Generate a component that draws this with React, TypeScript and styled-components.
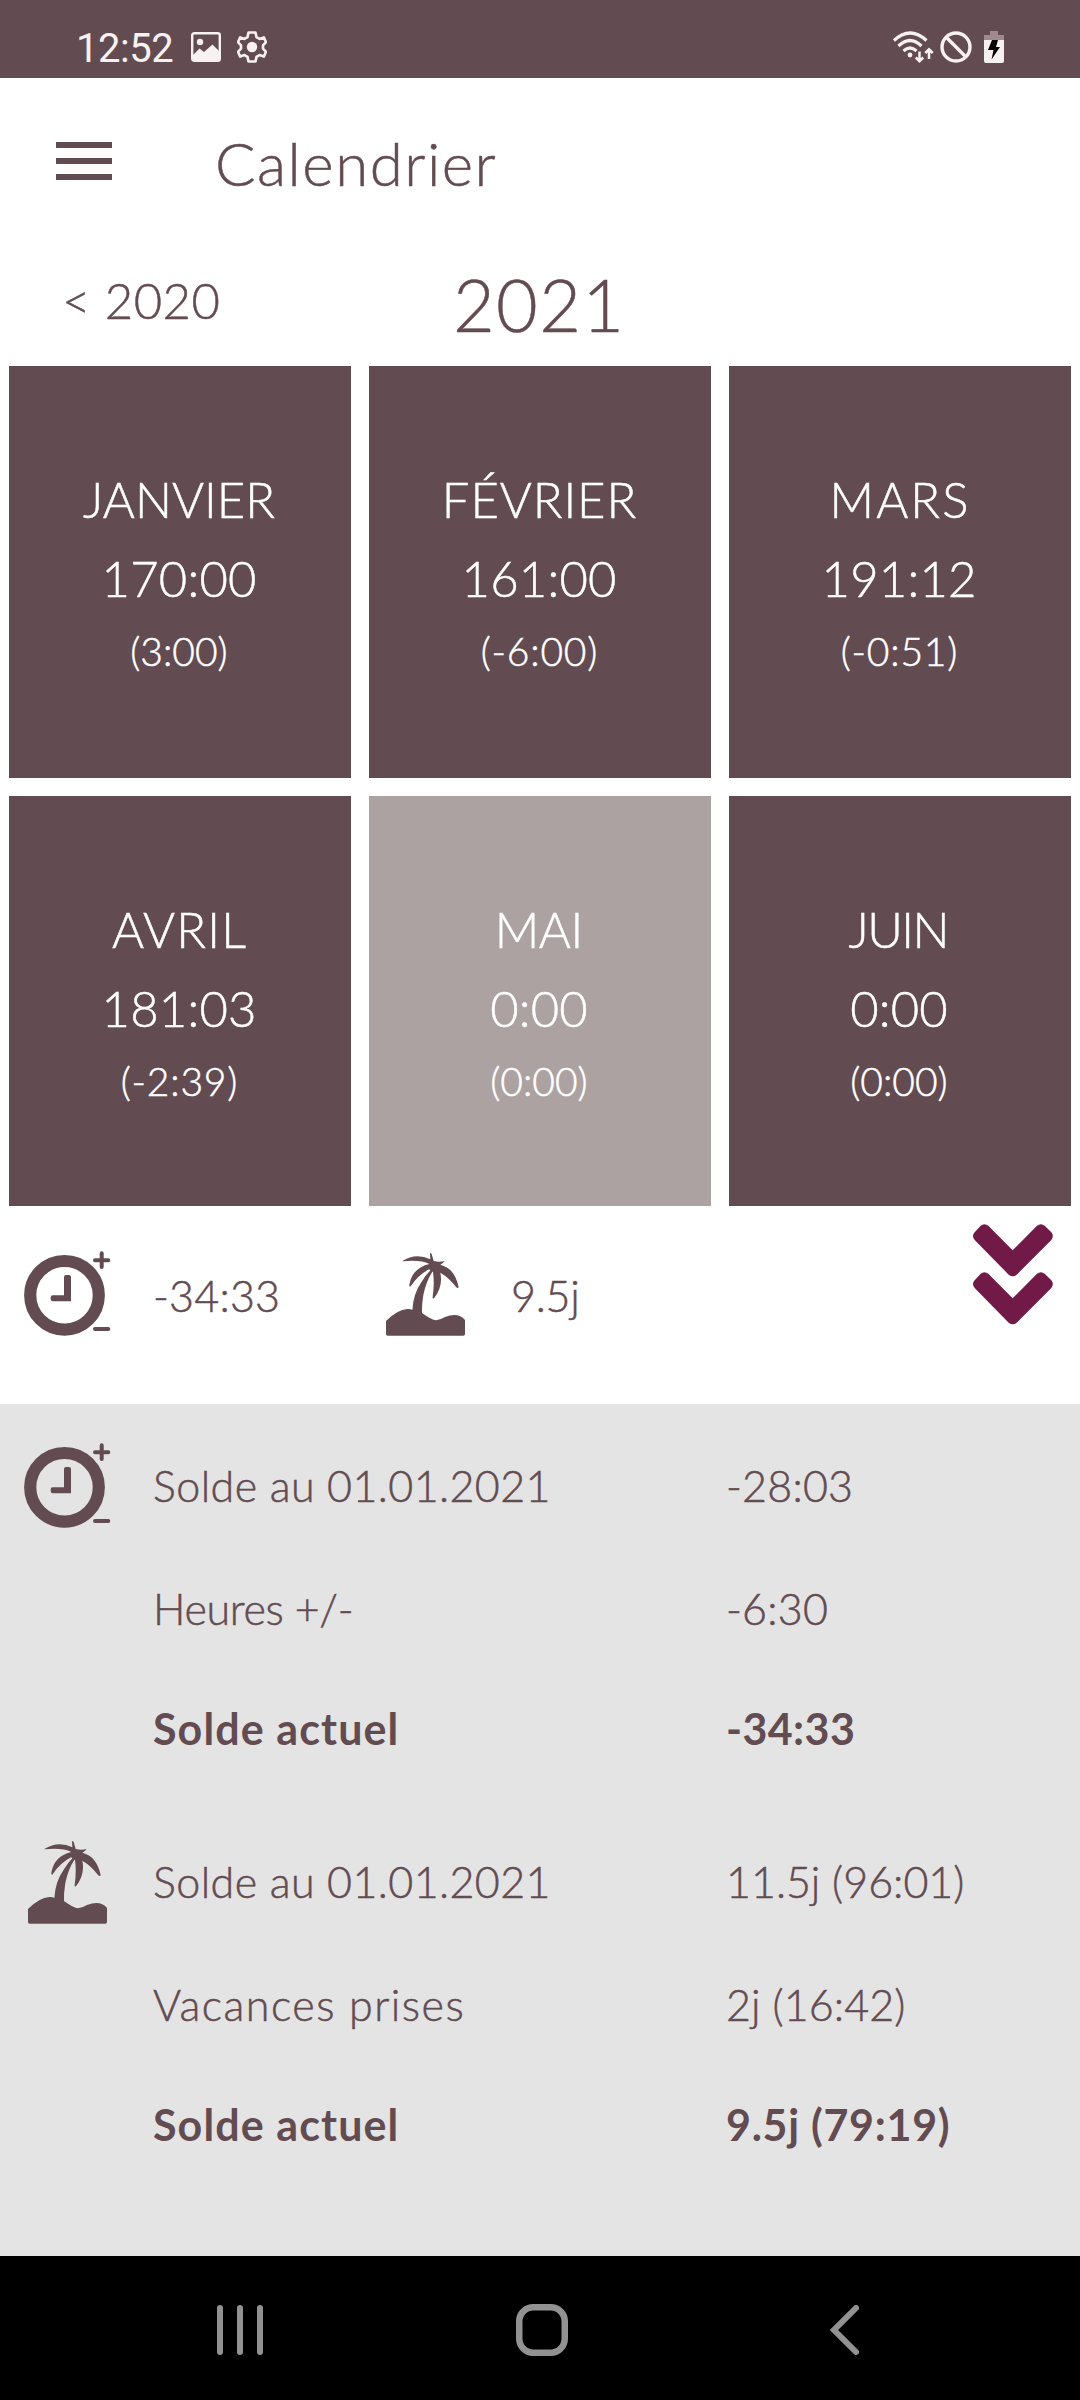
import React from "react";
import styled, { createGlobalStyle } from "styled-components";

const brand = "#634c51";

const GlobalStyle = createGlobalStyle`
  *, *::before, *::after { box-sizing: border-box; }
  body { margin: 0; background: #fff; }
`;

const Screen = styled.div`
  display: flex;
  flex-direction: column;
  width: 1080px;
  height: 2400px;
  overflow: hidden;
  background: #fff;
  color: ${brand};
  font-family: "Lato", "Open Sans", sans-serif;
  font-weight: 300;
`;

const StatusBar = styled.header`
  display: flex;
  align-items: center;
  height: 78px;
  padding: 16px 76px 0 76px;
  background: ${brand};
  color: #f7f1f2;
  svg { display: block; flex: none; }
`;
const Clock = styled.span`
  width: 115px;
  font: 400 40px/40px Roboto, sans-serif;
  letter-spacing: -0.5px;
  padding-top: 4px;
`;
const StatusGroup = styled.div<{ $gap: number }>`
  display: flex;
  align-items: center;
  gap: ${(p) => p.$gap}px;
`;
const Spacer = styled.div`
  flex: 1;
`;

const Text = styled.span<{ $size: number; $track?: number; $bold?: boolean }>`
  display: block;
  white-space: nowrap;
  font-size: ${(p) => p.$size}px;
  line-height: 60px;
  letter-spacing: ${(p) => p.$track ?? 0}px;
  margin-right: ${(p) => -(p.$track ?? 0)}px;
  font-weight: ${(p) => (p.$bold ? 700 : 300)};
  -webkit-text-stroke: ${(p) => (p.$bold ? 0 : 0.5)}px currentColor;
`;

const AppBar = styled.div`
  display: flex;
  align-items: center;
  height: 168px;
  padding: 1px 56px 0;
  gap: 103px;
`;
const MenuButton = styled.button`
  display: flex;
  flex-direction: column;
  gap: 10px;
  width: 56px;
  margin-top: -3px;
  padding: 0;
  border: 0;
  background: none;
`;
const MenuLine = styled.i`
  height: 6px;
  background: ${brand};
`;
const YearBar = styled.div`
  display: grid;
  grid-template-columns: 1fr 1fr 1fr;
  height: 120px;
  padding: 24px 9px 0;
`;
const PreviousYear = styled.div`
  padding-left: 53px;
`;
const CurrentYear = styled.div`
  display: flex;
  justify-content: center;
  padding: 4px 3px 0 0;
`;

const Months = styled.main`
  display: grid;
  grid-template-columns: repeat(3, 342px);
  grid-template-rows: 412px 410px;
  gap: 18px;
  padding: 0 9px;
`;
const Month = styled.section<{ $current?: boolean }>`
  display: flex;
  flex-direction: column;
  align-items: center;
  padding: 103px 2px 0 0;
  background: ${(p) => (p.$current ? "#aca2a1" : brand)};
  color: #fff;
`;
const MonthName = styled.div`
  height: 79px;
`;
const MonthTotal = styled.div`
  height: 73px;
`;

const Summary = styled.div`
  display: flex;
  height: 198px;
  padding: 0 27px 0 24px;
`;
const IconCell = styled.div<{ $inset?: number; $top: number }>`
  width: 129px;
  flex: none;
  padding: ${(p) => p.$top}px 0 0 ${(p) => p.$inset ?? 0}px;
  svg { display: block; }
`;
const SummaryValue = styled.div<{ $width: number }>`
  width: ${(p) => p.$width}px;
  padding-top: 60px;
`;
const ExpandButton = styled.button`
  align-self: flex-start;
  margin-left: auto;
  padding: 18px 0 0;
  border: 0;
  background: none;
  svg { display: block; }
`;

const Details = styled.div`
  height: 852px;
  padding: 39px 0 0 24px;
  background: #e4e4e4;
`;
const Balance = styled.section`
  display: flex;
  height: 396px;
`;
const Lines = styled.div`
  padding-top: 13px;
`;
const Line = styled.div<{ $height: number }>`
  display: grid;
  grid-template-columns: 573px auto;
  height: ${(p) => p.$height}px;
`;

const NavBar = styled.nav`
  display: flex;
  align-items: center;
  justify-content: space-between;
  height: 144px;
  padding: 4px 221px 0 217px;
  background: #000;
  svg { display: block; }
`;
const HomeButton = styled.div`
  margin-right: 8px;
`;

const PictureIcon = () => (
  <svg width="30" height="30" viewBox="0 0 30 30" fill="none">
    <rect x="1.2" y="1.2" width="27.6" height="27.6" rx="2" stroke="currentColor" strokeWidth="2.4" />
    <circle cx="9" cy="10" r="3.2" fill="currentColor" />
    <path d="M2 23 L8.5 16.5 L13 20 L21.5 12.5 L28 19 V28 H2Z" fill="currentColor" />
  </svg>
);
const GearIcon = () => (
  <svg width="30" height="32" viewBox="0 0 30 32" fill="none" stroke="currentColor">
    <path
      d="M11.5 1.5h7l1 4.6 3 1.8 4.3-1.5 2.2 4.8-3 3.2v3.2l3 3.2-2.2 4.8-4.3-1.5-3 1.8-1 4.6h-7l-1-4.6-3-1.8-4.3 1.5-2.2-4.8 3-3.2v-3.2l-3-3.2 2.2-4.8 4.3 1.5 3-1.8z"
      strokeWidth="2.6"
      strokeLinejoin="round"
    />
    <circle cx="15" cy="16" r="5.2" fill="currentColor" stroke="none" />
  </svg>
);
const WifiIcon = () => (
  <svg width="41" height="32" viewBox="0 0 41 32" fill="none" stroke="currentColor" strokeWidth="3.2">
    <path d="M1 9.5Q17 -5.500 33.500 9.500M5.500 15Q17 4 28.500 15M10.500 20Q17 14 23.500 20" />
    <circle cx="17" cy="24" r="2.4" fill="currentColor" stroke="none" />
    <path d="M26.500 20.500V30M22.800 26.500L26.500 30.200L30.200 26.500M36 28V18.500M32.300 22L36 18.300L39.700 22" strokeWidth="2.5" />
  </svg>
);
const BlockedIcon = () => (
  <svg width="32" height="32" viewBox="0 0 32 32" fill="none" stroke="currentColor" strokeWidth="3.4">
    <circle cx="16" cy="16" r="14" />
    <path d="M6 6L26 26" />
  </svg>
);
const BatteryIcon = () => (
  <svg width="20" height="32" viewBox="0 0 20 32">
    <path d="M6 0h8v4h6v5H0V4h6z" fill="#a08a8f" />
    <path d="M0 9h20v21a2 2 0 0 1-2 2H2a2 2 0 0 1-2-2z" fill="currentColor" />
    <path d="M8 9h6l-2 7h4L7.500 28.500L9.500 19H4z" fill="#080506" />
  </svg>
);
const HoursIcon = () => (
  <svg width="87" height="86" viewBox="0 0 87 86" fill={brand} stroke={brand}>
    <circle cx="40.500" cy="44.300" r="34.300" strokeWidth="12.200" fill="none" />
    <path d="M42 24h3q2 0 2 2v24.300H28.700q-2 0-2-2v-2q0-2 2-2H40V26q0-2 2-2z" stroke="none" />
    <path d="M71 9.300h13.300M77.700 2.300v13.700M71 78h13.300" strokeWidth="4" strokeLinecap="round" />
  </svg>
);
const PalmIcon = () => (
  <svg width="79" height="83" viewBox="78 219 237 249" fill={brand}>
    <path d="M78 423Q112 389 142 387Q152 386 157 390Q160 340 185 305Q197 285 214 268L218 274Q198 305 190 345Q185 375 186 399Q215 420 228 421Q240 420 255 411Q295 396 315 420V462Q315 467 310 467H83Q78 467 78 462Z" />
    <path d="M127 243Q168 217 211 238L210 221Q212 217 215 222L221 243Q238 247 254 243Q249 250 241 254Q285 265 296 322Q293 326 288 321Q267 293 241 278Q250 320 222 355Q217 358 218 350Q224 310 219 276L207 268Q174 285 152 319Q148 322 148 315Q155 265 208 252Q182 239 129 244Z" />
  </svg>
);
const DoubleChevron = () => (
  <svg width="80" height="101" viewBox="219 131 240 303" fill="#721a47">
    {[0, 144].map((dy) => (
      <path
        key={dy}
        transform={`translate(0 ${dy})`}
        d="M242 136Q253 127 265 136L338 210L411 136Q423 127 434 136L454 156Q463 167 454 179L350 283Q338 293 326 283L224 179Q214 167 224 156Z"
      />
    ))}
  </svg>
);

type MonthData = {
  name: string;
  total: string;
  diff: string;
  track: number;
  diffTrack?: number;
  current?: boolean;
};
const months: MonthData[] = [
  { name: "JANVIER", total: "170:00", diff: "(3:00)", track: 0 },
  { name: "FÉVRIER", total: "161:00", diff: "(-6:00)", track: 0.9, diffTrack: 0.8 },
  { name: "MARS", total: "191:12", diff: "(-0:51)", track: 2.1, diffTrack: 0.8 },
  { name: "AVRIL", total: "181:03", diff: "(-2:39)", track: 1.2, diffTrack: 0.8 },
  { name: "MAI", total: "0:00", diff: "(0:00)", track: -0.5, current: true },
  { name: "JUIN", total: "0:00", diff: "(0:00)", track: -1.6 },
];

type LineData = {
  label: string;
  value: string;
  height: number;
  bold?: boolean;
  track?: number;
  valueTrack?: number;
};
const hours: LineData[] = [
  { label: "Solde au 01.01.2021", value: "-28:03", height: 123, track: 0.43, valueTrack: 0.2 },
  { label: "Heures +/-", value: "-6:30", height: 120, track: -0.35, valueTrack: 0.2 },
  { label: "Solde actuel", value: "-34:33", height: 60, bold: true, track: 1.1, valueTrack: 0.4 },
];
const holidays: LineData[] = [
  { label: "Solde au 01.01.2021", value: "11.5j (96:01)", height: 123, track: 0.43 },
  { label: "Vacances prises", value: "2j (16:42)", height: 120, track: 1.45, valueTrack: 0.1 },
  { label: "Solde actuel", value: "9.5j (79:19)", height: 60, bold: true, track: 1.1, valueTrack: 0.7 },
];

type BalanceProps = { icon: React.ReactNode; inset?: number; top: number; lines: LineData[] };
const BalanceBlock = ({ icon, inset, top, lines }: BalanceProps) => (
  <Balance>
    <IconCell $top={top} $inset={inset}>{icon}</IconCell>
    <Lines>
      {lines.map((l) => (
        <Line key={l.label} $height={l.height}>
          <Text $size={43} $bold={l.bold} $track={l.track}>{l.label}</Text>
          <Text $size={43} $bold={l.bold} $track={l.valueTrack}>{l.value}</Text>
        </Line>
      ))}
    </Lines>
  </Balance>
);

export default function App() {
  return (
    <Screen>
      <GlobalStyle />
      <StatusBar>
        <Clock>12:52</Clock>
        <StatusGroup $gap={16}>
          <PictureIcon />
          <GearIcon />
        </StatusGroup>
        <Spacer />
        <StatusGroup $gap={6}>
          <WifiIcon />
          <BlockedIcon />
          <Spacer />
          <BatteryIcon />
        </StatusGroup>
      </StatusBar>
      <AppBar>
        <MenuButton aria-label="Menu">
          <MenuLine />
          <MenuLine />
          <MenuLine />
        </MenuButton>
        <Text $size={60} $track={1.5}>Calendrier</Text>
      </AppBar>
      <YearBar>
        <PreviousYear><Text $size={49} $track={0.5}>&lt; 2020</Text></PreviousYear>
        <CurrentYear><Text $size={72} $track={1.3}>2021</Text></CurrentYear>
      </YearBar>
      <Months>
        {months.map((m) => (
          <Month key={m.name} $current={m.current}>
            <MonthName><Text $size={49} $track={m.track}>{m.name}</Text></MonthName>
            <MonthTotal><Text $size={49} $track={0.2}>{m.total}</Text></MonthTotal>
            <Text $size={39} $track={m.diffTrack}>{m.diff}</Text>
          </Month>
        ))}
      </Months>
      <Summary>
        <IconCell $top={45}><HoursIcon /></IconCell>
        <SummaryValue $width={229}><Text $size={43} $track={0.2}>-34:33</Text></SummaryValue>
        <IconCell $top={47} $inset={4}><PalmIcon /></IconCell>
        <SummaryValue $width={200}><Text $size={43} $track={-0.2}>9.5j</Text></SummaryValue>
        <ExpandButton aria-label="Afficher plus"><DoubleChevron /></ExpandButton>
      </Summary>
      <Details>
        <BalanceBlock icon={<HoursIcon />} top={0} lines={hours} />
        <BalanceBlock icon={<PalmIcon />} top={2} inset={4} lines={holidays} />
      </Details>
      <NavBar>
        <svg width="46" height="50" viewBox="0 0 46 50" stroke="#929292" strokeWidth="6" strokeLinecap="round">
          <path d="M3 3V47M23 3V47M43 3V47" />
        </svg>
        <HomeButton>
          <svg width="52" height="52" viewBox="0 0 52 52" fill="none" stroke="#929292" strokeWidth="6.500">
            <rect x="3.250" y="3.250" width="45.500" height="45.500" rx="14" />
          </svg>
        </HomeButton>
        <svg width="30" height="50" viewBox="0 0 30 50" fill="none" stroke="#929292" strokeWidth="6" strokeLinecap="round">
          <path d="M27 3L5 25L27 47" />
        </svg>
      </NavBar>
    </Screen>
  );
}
